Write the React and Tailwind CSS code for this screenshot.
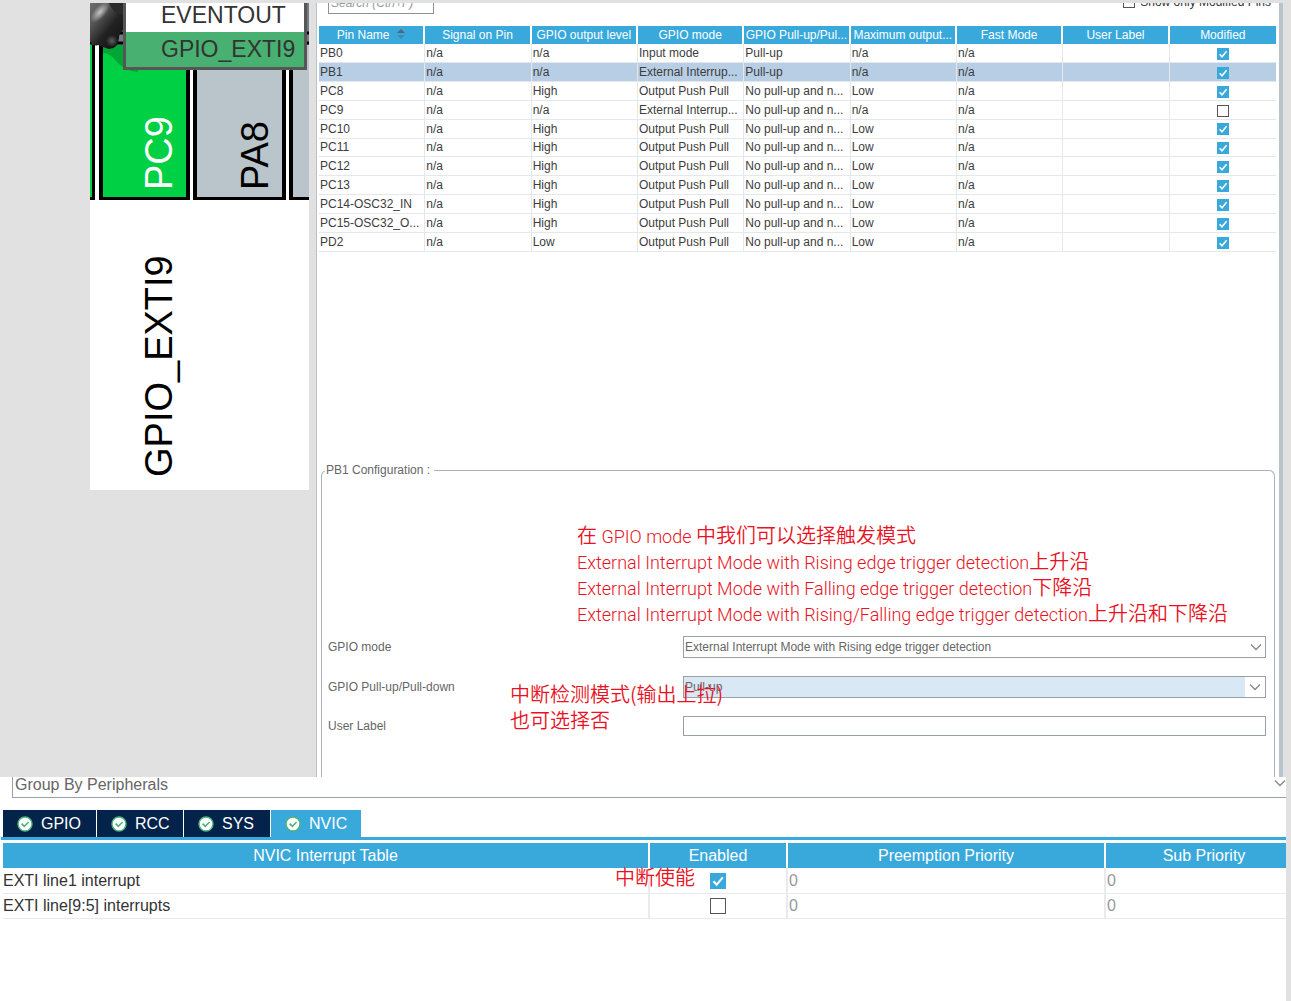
import React from "react";

const pins = [
  ["PB0", "n/a", "n/a", "Input mode", "Pull-up", "n/a", "n/a", "", true],
  ["PB1", "n/a", "n/a", "External Interrup...", "Pull-up", "n/a", "n/a", "", true],
  ["PC8", "n/a", "High", "Output Push Pull", "No pull-up and n...", "Low", "n/a", "", true],
  ["PC9", "n/a", "n/a", "External Interrup...", "No pull-up and n...", "n/a", "n/a", "", false],
  ["PC10", "n/a", "High", "Output Push Pull", "No pull-up and n...", "Low", "n/a", "", true],
  ["PC11", "n/a", "High", "Output Push Pull", "No pull-up and n...", "Low", "n/a", "", true],
  ["PC12", "n/a", "High", "Output Push Pull", "No pull-up and n...", "Low", "n/a", "", true],
  ["PC13", "n/a", "High", "Output Push Pull", "No pull-up and n...", "Low", "n/a", "", true],
  ["PC14-OSC32_IN", "n/a", "High", "Output Push Pull", "No pull-up and n...", "Low", "n/a", "", true],
  ["PC15-OSC32_O...", "n/a", "High", "Output Push Pull", "No pull-up and n...", "Low", "n/a", "", true],
  ["PD2", "n/a", "Low", "Output Push Pull", "No pull-up and n...", "Low", "n/a", "", true],
];

const headers = [
  "Pin Name",
  "Signal on Pin",
  "GPIO output level",
  "GPIO mode",
  "GPIO Pull-up/Pul...",
  "Maximum output...",
  "Fast Mode",
  "User Label",
  "Modified",
];

function Check({ label, checked, large }) {
  return (
    <span className={large ? "relative inline-grid size-4 align-middle" : "relative inline-grid size-3 align-middle"}>
      <input
        type="checkbox"
        aria-label={label}
        defaultChecked={checked}
        className="peer size-full appearance-none border border-[#555] bg-white checked:border-[#39a9dc] checked:bg-[#39a9dc]"
      />
      <svg viewBox="0 0 12 12" className="pointer-events-none absolute inset-0 hidden size-full peer-checked:block">
        <path d="M2.6 6.2 5 8.8 9.6 3.2" fill="none" stroke="#fff" strokeWidth="1.5" />
      </svg>
    </span>
  );
}

function Chevron({ className }) {
  return (
    <svg viewBox="0 0 12 8" className={className}>
      <path d="M1 1.5 6 6.5 11 1.5" fill="none" stroke="#888" strokeWidth="1.3" />
    </svg>
  );
}

function ChipView() {
  return (
    <div className="relative h-[487px] w-[219px] shrink-0 overflow-hidden bg-white">
      <svg viewBox="0 0 219 487" className="block size-full" fontFamily="'Liberation Sans', Arial, sans-serif" fontSize="38">
        <defs>
          <linearGradient id="metal" x1="0" y1="0" x2="0.9" y2="1">
            <stop offset="0" stopColor="#6e6e6e" />
            <stop offset="0.3" stopColor="#555" />
            <stop offset="0.6" stopColor="#222" />
            <stop offset="1" stopColor="#111" />
          </linearGradient>
          <radialGradient id="shine">
            <stop offset="0" stopColor="#c4c4c4" />
            <stop offset="1" stopColor="#c4c4c4" stopOpacity="0" />
          </radialGradient>
        </defs>
        <rect width="219" height="42" fill="#747c80" />
        <path d="M0 30H219M0 40H219" stroke="#000" strokeWidth="3" />
        <rect y="42" width="5" height="155" fill="#000" />
        <rect y="42" width="2" height="152" fill="#00d043" />
        <rect x="9" y="42" width="91" height="155" fill="#000" />
        <rect x="13" y="42" width="83" height="152" fill="#00d043" />
        <path d="M13 42H48V69Q34 68 26 58Q20 50 13 50Z" fill="#00a636" />
        <rect x="103" y="42" width="93" height="155" fill="#000" />
        <rect x="107" y="42" width="85" height="152" fill="#b9c4cb" />
        <rect x="199" y="42" width="20" height="155" fill="#000" />
        <rect x="203" y="42" width="16" height="152" fill="#b9c4cb" />
        <path d="M0 0H33V27Q29 30 29 35Q28 46 19 46Q12 44 8 42Q3 44 0 38Z" fill="url(#metal)" />
        <path d="M19 0H33V12Q24 12 19 0Z" fill="#2a2a2a" />
        <ellipse cx="10" cy="9" rx="13" ry="6" transform="rotate(-48 10 9)" fill="url(#shine)" />
        <ellipse cx="22" cy="38" rx="6" ry="6" fill="url(#shine)" opacity="0.4" />
        <text transform="translate(82 187) rotate(-90)" fill="#fff">PC9</text>
        <text transform="translate(178 187) rotate(-90)" fill="#000">PA8</text>
        <text transform="translate(82 474) rotate(-90)" fill="#000">GPIO_EXTI9</text>
      </svg>
      <div role="menu" className="absolute -top-1 right-[2px] w-[184px] border-[3px] border-[#565656] text-[23px] text-[#333]">
        <button type="button" role="menuitem" className="block h-[30px] w-full bg-white pb-1 pl-[35px] text-left leading-6">
          EVENTOUT
        </button>
        <button type="button" role="menuitem" className="block h-[35px] w-full bg-[#48b070] pl-[35px] text-left leading-[35px]">
          GPIO_EXTI9
        </button>
      </div>
    </div>
  );
}

function PinTable() {
  return (
    <table className="h-[226px] w-full table-fixed border-separate border-spacing-0 text-xs text-[#3c3c3c]">
      <thead>
        <tr className="h-[18px]">
          {headers.map((h, i) => (
            <th
              key={h}
              scope="col"
              className="border-r-2 border-white bg-[#39a9dc] p-0 text-center font-normal whitespace-nowrap leading-[18px] text-white last:border-r-0"
            >
              {h}
              {i === 0 && (
                <svg viewBox="0 0 10 10" className="ml-1.5 inline size-2.5 align-baseline">
                  <path d="M1 4 5 0 9 4Z" fill="#55666f" />
                  <path d="M1 6 5 10 9 6Z" fill="#3590b8" />
                </svg>
              )}
            </th>
          ))}
        </tr>
      </thead>
      <tbody>
        {pins.map((row, r) => (
          <tr key={row[0]} className={r === 1 ? "bg-[#b8cee5]" : "bg-white"}>
            {row.map((cell, c) => (
              <td
                key={c}
                className={
                  c === 8
                    ? "border-b border-[#e4e8ec] p-0 text-center leading-4"
                    : "border-r border-b border-[#e4e8ec] py-0 pl-px whitespace-nowrap leading-4"
                }
              >
                {c === 8 ? <Check label={row[0] + " modified"} checked={cell} /> : cell}
              </td>
            ))}
          </tr>
        ))}
      </tbody>
    </table>
  );
}

function Note({ className, children }) {
  return (
    <div
      className={
        "pointer-events-none absolute z-10 whitespace-nowrap font-['Roboto','Noto_Sans_CJK_SC',sans-serif] text-[18px] leading-[26px] font-[350] text-[#e81224] " +
        className
      }
    >
      {children}
    </div>
  );
}

function Line({ children }) {
  return <p className="flex h-[26px] items-baseline whitespace-pre">{children}</p>;
}

function Zh({ children }) {
  return <span lang="zh-CN" className="font-['Noto_Sans_CJK_SC',sans-serif] text-[20px] leading-[26px] font-[350]">{children}</span>;
}

function PinConfiguration() {
  return (
    <fieldset className="relative mx-1 rounded-t-md border border-b-0 border-[#a9b1b7] px-[6px] pb-[41px] pr-2 text-xs text-[#666]">
      <legend className="ml-[-3px] px-px pr-1 leading-4">PB1 Configuration :</legend>
      <div className="grid grid-cols-[355fr_583fr] items-center gap-y-[18px] pt-[158px]">
        <label htmlFor="gpio-mode">GPIO mode</label>
        <div className="relative">
          <select id="gpio-mode" className="block h-[22px] w-full appearance-none border border-[#999fa5] bg-white pl-px">
            <option>External Interrupt Mode with Rising edge trigger detection</option>
          </select>
          <Chevron className="pointer-events-none absolute top-[7px] right-1 h-2 w-3" />
        </div>
        <label htmlFor="gpio-pull">GPIO Pull-up/Pull-down</label>
        <div className="relative">
          <select
            id="gpio-pull"
            className="block h-[22px] w-full appearance-none border border-[#999fa5] bg-[#d9e8f5] pl-px"
          >
            <option>Pull-up</option>
          </select>
          <span className="pointer-events-none absolute inset-y-px right-px flex w-5 items-center justify-center bg-white">
            <Chevron className="h-2 w-3" />
          </span>
        </div>
        <label htmlFor="user-label">User Label</label>
        <input id="user-label" type="text" className="block h-5 w-full border border-[#999fa5] bg-white px-px" />
      </div>
      <Note className="top-[44px] left-[255px]">
        <Line><Zh>在</Zh> GPIO mode <Zh>中我们可以选择触发模式</Zh></Line>
        <Line>External Interrupt Mode with Rising edge trigger detection<Zh>上升沿</Zh></Line>
        <Line>External Interrupt Mode with Falling edge trigger detection<Zh>下降沿</Zh></Line>
        <Line>External Interrupt Mode with Rising/Falling edge trigger detection<Zh>上升沿和下降沿</Zh></Line>
      </Note>
      <Note className="top-[203px] left-[188px]">
        <Line><Zh>中断检测模式(输出上拉)</Zh></Line>
        <Line><Zh>也可选择否</Zh></Line>
      </Note>
    </fieldset>
  );
}

function Tab({ name, active, className }) {
  return (
    <button
      type="button"
      role="tab"
      aria-selected={Boolean(active)}
      className={
        (active ? "bg-[#39a9dc] " : "bg-[#03234b] ") + "flex h-[27px] items-center gap-2 pl-[14px] text-white " + className
      }
    >
      <svg viewBox="0 0 16 16" className="size-4">
        <circle cx="8" cy="8" r="7" fill="#fff" stroke="#4fb27c" strokeWidth="1.4" />
        <path d="M4.6 7.6 7.3 10.4 11.6 6" fill="none" stroke="#4fb27c" strokeWidth="1.6" />
      </svg>
      {name}
    </button>
  );
}

function NvicPanel() {
  const th = "border-r-2 border-white bg-[#39a9dc] p-0 text-center font-normal text-white";
  const td = "border-r-2 border-b border-[#e8eaed] p-0";
  return (
    <section className="relative mr-[5px] flex-1 overflow-hidden bg-white text-base text-[#333]">
      <div className="relative -mt-1.5 ml-3">
        <select
          aria-label="Grouping"
          className="block h-[27px] w-full appearance-none border border-r-0 border-[#999fa5] bg-white pl-0.5 text-[#666]"
        >
          <option>Group By Peripherals</option>
        </select>
        <Chevron className="pointer-events-none absolute top-2 right-0 h-2 w-3" />
      </div>
      <div role="tablist" className="mt-3 flex gap-px pl-[3px]">
        <Tab name="GPIO" className="w-[93px]" />
        <Tab name="RCC" className="w-[86px]" />
        <Tab name="SYS" className="w-[86px]" />
        <Tab name="NVIC" active className="w-[90px]" />
      </div>
      <div className="ml-px border-t-[3px] border-[#39a9dc] pt-[3px] pl-0.5">
        <table className="w-[calc(100%+18px)] table-fixed border-separate border-spacing-0">
          <colgroup>
            <col />
            <col className="w-[138px]" />
            <col className="w-[318px]" />
            <col className="w-[198px]" />
          </colgroup>
          <thead>
            <tr className="h-[25px]">
              <th scope="col" className={th}>NVIC Interrupt Table</th>
              <th scope="col" className={th}>Enabled</th>
              <th scope="col" className={th}>Preemption Priority</th>
              <th scope="col" className={th}>Sub Priority</th>
            </tr>
          </thead>
          <tbody>
            <tr className="h-[26px]">
              <td className={td}>EXTI line1 interrupt</td>
              <td className={td + " text-center leading-4"}><Check large checked label="Enable EXTI line1 interrupt" /></td>
              <td className={td + " pl-px text-[#999]"}>0</td>
              <td className={td + " pl-px text-[#999]"}>0</td>
            </tr>
            <tr className="h-[25px]">
              <td className={td}>EXTI line[9:5] interrupts</td>
              <td className={td + " text-center leading-4"}><Check large label="Enable EXTI line[9:5] interrupts" /></td>
              <td className={td + " pl-px text-[#999]"}>0</td>
              <td className={td + " pl-px text-[#999]"}>0</td>
            </tr>
          </tbody>
        </table>
      </div>
      <Note className="top-[87px] right-[591px]"><Line><Zh>中断使能</Zh></Line></Note>
    </section>
  );
}

export default function App() {
  return (
    <main className="flex min-h-screen flex-col bg-[#e1e1e1] pt-[3px] font-['Liberation_Sans',Arial,sans-serif]">
      <div className="flex gap-[7px] pr-2 pl-[90px]">
        <ChipView />
        <section className="min-w-0 flex-1 overflow-hidden border-r-4 border-l border-r-[#b8c4cc] border-l-[#b8c4cc] bg-white">
          <div className="-mt-[11px] flex items-center justify-between pr-2 pl-[11px] text-xs text-[#333]">
            <input
              type="search"
              aria-label="Search pins"
              placeholder="Search (Ctrl+F)"
              className="block h-[22px] w-[106px] appearance-none border border-[#8d9296] bg-white px-0.5 italic placeholder:text-[#999]"
            />
            <label className="mb-[3px] flex items-center gap-[5px] leading-4">
              <Check label="Show only Modified Pins" />
              Show only Modified Pins
            </label>
          </div>
          <div className="mt-3 mr-[3px] ml-0.5 h-[436px]">
            <PinTable />
          </div>
          <PinConfiguration />
        </section>
      </div>
      <NvicPanel />
    </main>
  );
}
